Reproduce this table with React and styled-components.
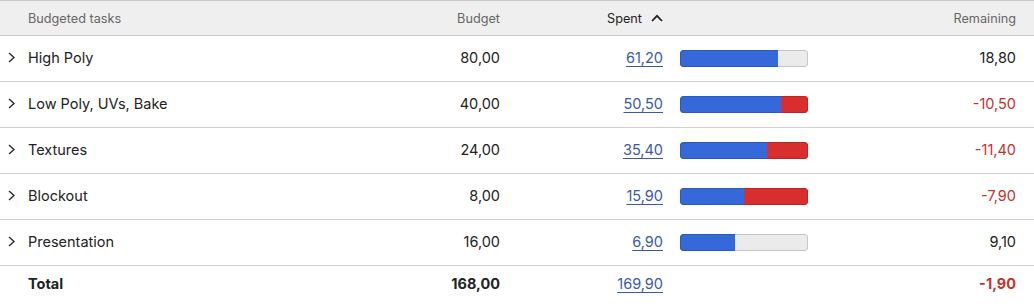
import React from "react";
import styled, { createGlobalStyle } from "styled-components";

const Global = createGlobalStyle`
  html, body { margin: 0; padding: 0; background: #fff; }
  body { font-family: Inter, "Noto Sans", Arial, sans-serif; color: #222; }
`;

const cols = "28px 372px 100px 163px 17px 128px 1fr";

const Table = styled.div`
  width: 1034px;
  display: flex;
  flex-direction: column;
`;

const HeaderRow = styled.div`
  display: grid;
  grid-template-columns: ${cols};
  padding-right: 18px;
  height: 34px;
  align-items: center;
  background: #efefef;
  border-top: 1px solid #c9c9c9;
  border-bottom: 1px solid #c9c9c9;
  font-size: 12.7px;
  color: #666;
`;

const Row = styled.div`
  display: grid;
  grid-template-columns: ${cols};
  padding-right: 18px;
  box-sizing: border-box;
  height: ${(p) => (p.$total ? "34px" : "46px")};
  padding-bottom: ${(p) => (p.$total ? "0" : "2px")};
  align-items: center;
  border-bottom: ${(p) => (p.$total ? "none" : "1px solid #d0d0d0")};
  font-size: 14.5px;
  font-weight: ${(p) => (p.$total ? 700 : 400)};
`;

const ChevronCell = styled.div`
  display: flex;
  align-items: center;
  padding-left: 8px;
`;

const Name = styled.div`
  white-space: nowrap;
`;

const Num = styled.div`
  text-align: right;
  white-space: nowrap;
  color: ${(p) => (p.$neg ? "#c9302c" : "inherit")};
`;

const HeadCell = styled.div`
  display: flex;
  justify-content: ${(p) => (p.$right ? "flex-end" : "flex-start")};
  align-items: center;
  gap: 9px;
  color: ${(p) => (p.$active ? "#222" : "#666")};
`;

const SpentLink = styled.a`
  color: #3a5aa8;
  font-weight: 400;
  text-decoration: underline;
  text-underline-offset: 3px;
  text-decoration-thickness: 1px;
  cursor: pointer;
  justify-self: end;
`;

const Bar = styled.div`
  height: 17px;
  margin-top: 2px;
  border-radius: 3px;
  overflow: hidden;
  display: flex;
`;

const Fill = styled.div`
  height: 100%;
  background: #3569d9;
  border: 1px solid #2b59c2;
  border-right: none;
  border-radius: 3px 0 0 3px;
  box-sizing: border-box;
`;

const Rest = styled.div`
  flex: 1;
  height: 100%;
  background: ${(p) => (p.$over ? "#d92e2e" : "#ebebeb")};
  border: 1px solid ${(p) => (p.$over ? "#b82626" : "#c6c6c6")};
  border-left: none;
  border-radius: 0 3px 3px 0;
  box-sizing: border-box;
`;

const Chevron = () => (
  <svg width="7" height="11" viewBox="0 0 7 11">
    <path d="M1 1 L6 5.5 L1 10" fill="none" stroke="#222" strokeWidth="1.3" />
  </svg>
);

const Caret = () => (
  <svg width="12" height="8" viewBox="0 0 12 8">
    <path d="M1 7 L6 1.8 L11 7" fill="none" stroke="#222" strokeWidth="1.8" />
  </svg>
);

const data = [
  { name: "High Poly", budget: 80, spent: 61.2 },
  { name: "Low Poly, UVs, Bake", budget: 40, spent: 50.5 },
  { name: "Textures", budget: 24, spent: 35.4 },
  { name: "Blockout", budget: 8, spent: 15.9 },
  { name: "Presentation", budget: 16, spent: 6.9 },
];

const fmt = (n) => n.toFixed(2).replace(".", ",");

export default function App() {
  const totalBudget = data.reduce((s, d) => s + d.budget, 0);
  const totalSpent = data.reduce((s, d) => s + d.spent, 0);
  return (
    <Table>
      <Global />
      <HeaderRow>
        <div />
        <HeadCell>Budgeted tasks</HeadCell>
        <HeadCell $right>Budget</HeadCell>
        <HeadCell $right $active>
          Spent <Caret />
        </HeadCell>
        <div />
        <div />
        <HeadCell $right>Remaining</HeadCell>
      </HeaderRow>
      {data.map((d) => {
        const rem = d.budget - d.spent;
        const over = d.spent > d.budget;
        const pct = over ? (d.budget / d.spent) * 100 : (d.spent / d.budget) * 100;
        return (
          <Row key={d.name}>
            <ChevronCell>
              <Chevron />
            </ChevronCell>
            <Name>{d.name}</Name>
            <Num>{fmt(d.budget)}</Num>
            <SpentLink>{fmt(d.spent)}</SpentLink>
            <div />
            <Bar>
              <Fill style={{ width: `${pct}%` }} />
              <Rest $over={over} />
            </Bar>
            <Num $neg={rem < 0}>{fmt(rem)}</Num>
          </Row>
        );
      })}
      <Row $total>
        <div />
        <Name>Total</Name>
        <Num>{fmt(totalBudget)}</Num>
        <SpentLink>{fmt(totalSpent)}</SpentLink>
        <div />
        <div />
        <Num $neg>{fmt(totalBudget - totalSpent)}</Num>
      </Row>
    </Table>
  );
}
